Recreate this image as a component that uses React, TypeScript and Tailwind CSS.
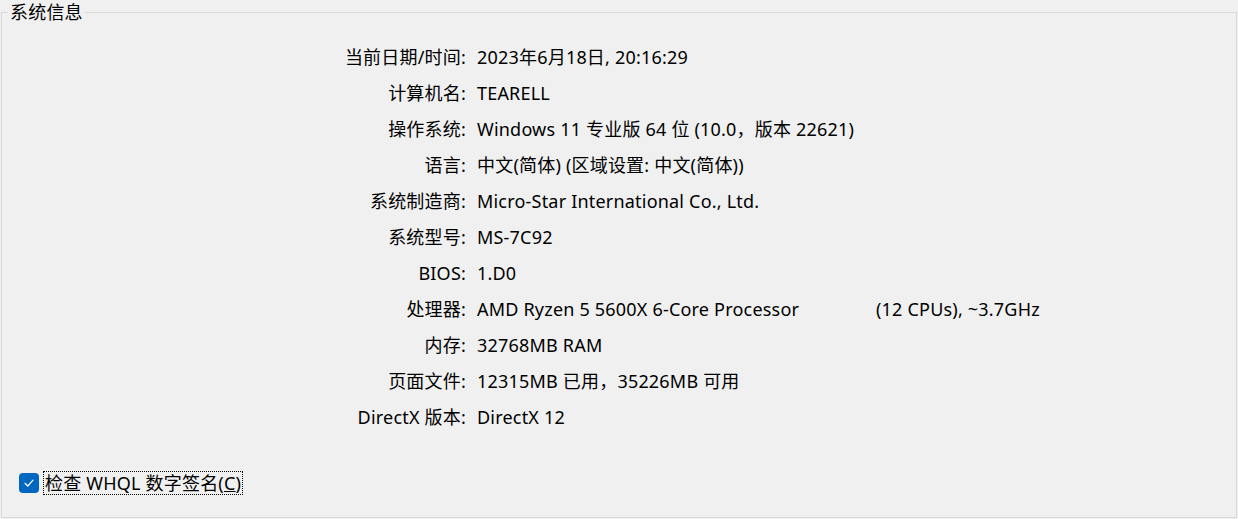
import React from 'react';

const rows: [string, React.ReactNode][] = [
  ['当前日期/时间:', '2023年6月18日, 20:16:29'],
  ['计算机名:', 'TEARELL'],
  ['操作系统:', 'Windows 11 专业版 64 位 (10.0，版本 22621)'],
  ['语言:', '中文(简体) (区域设置: 中文(简体))'],
  ['系统制造商:', 'Micro-Star International Co., Ltd.'],
  ['系统型号:', 'MS-7C92'],
  ['BIOS:', '1.D0'],
  [
    '处理器:',
    <span className="flex">
      <span className="w-[399px]">AMD Ryzen 5 5600X 6-Core Processor</span>
      <span>(12 CPUs), ~3.7GHz</span>
    </span>,
  ],
  ['内存:', '32768MB RAM'],
  ['页面文件:', '12315MB 已用，35226MB 可用'],
  ['DirectX 版本:', 'DirectX 12'],
];

export default function App() {
  return (
    <div
      className="w-[1238px] h-[519px] bg-[#f0f0f0] text-[18px] tracking-[0.2px] text-black overflow-hidden"
      style={{ fontFamily: '"Noto Sans", "Noto Sans CJK SC", sans-serif' }}
    >
      <fieldset className="mx-[1px] w-[1236px] h-[518px] border border-[#d9d9d9] px-0 pb-0 pt-0 m-0">
        <legend className="ml-[6px] px-[2px] leading-[24px]">系统信息</legend>
        <div className="pt-[15px]">
          {rows.map(([label, value], i) => (
            <div key={i} className="flex h-[36px] items-center leading-[24px]">
              <div className="w-[464px] text-right shrink-0">{label}</div>
              <div className="pl-[11px]">{value}</div>
            </div>
          ))}
        </div>
        <div className="mt-[36px] ml-[17px] flex items-center gap-[4px]">
          <span className="w-[20px] h-[20px] rounded-[4px] bg-[#0067c0] flex items-center justify-center">
            <svg width="12" height="12" viewBox="0 0 12 12" fill="none">
              <path d="M2 6.3 L4.8 9 L10 3.2" stroke="white" strokeWidth="1.2" strokeLinecap="round" strokeLinejoin="round" />
            </svg>
          </span>
          <span className="border border-dotted border-black leading-[22px] px-[1px]">检查 WHQL 数字签名(<u>C</u>)</span>
        </div>
      </fieldset>
    </div>
  );
}
